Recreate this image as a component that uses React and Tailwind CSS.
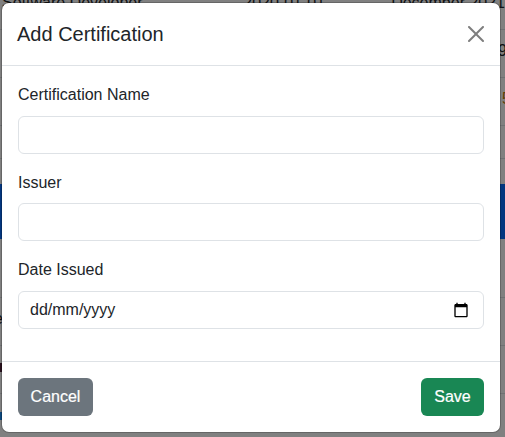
import React from "react";

function Field({ label, children, className = "" }) {
  return (
    <div className={className}>
      <label className="block h-[34px] pt-px leading-6">{label}</label>
      {children}
    </div>
  );
}

const box =
  "flex h-[38px] w-full items-center justify-between rounded-md border border-[#dee2e6] bg-white pl-[11px] pr-3 outline-none";

function Backdrop() {
  return (
    <div className="flex h-[437px] w-[505px] flex-col overflow-hidden bg-[#808080] text-[#101214]">
      <div className="flex h-[30px] shrink-0 border-b border-[#6f7173] pl-[2px]">
        <span className="-mt-[9px] w-[243px] leading-6">Software Developer</span>
        <span className="-mt-[9px] w-[149px] leading-6">2020-01-01</span>
        <span className="-mt-[9px] whitespace-nowrap leading-6">December 2021</span>
      </div>
      <div className="flex h-12 shrink-0 items-center justify-end border-b border-[#6f7173]">
        <span className="-mr-[2px] mt-[-6px]">9</span>
      </div>
      <div className="flex h-12 shrink-0 items-center justify-end border-b border-[#6f7173]">
        <span className="-mr-[6px] mt-[-6px] text-[#633d05]">5</span>
      </div>
      <div className="h-[33px] shrink-0 border-b border-[#6f7173]" />
      <div className="h-[25px] shrink-0" />
      <div className="h-[55px] shrink-0 bg-[#03367f]" />
      <div className="h-[59px] shrink-0 border-b border-[#6f7173]" />
      <div className="flex h-12 shrink-0 items-center border-b border-[#6f7173]">
        <span className="-ml-[6px] mt-[-6px]">e</span>
      </div>
      <div className="flex h-12 shrink-0 items-center border-b border-[#6f7173]">
        <span className="-mt-[4px] h-[9px] w-[2px] bg-[#28101c]" />
      </div>
      <div className="flex h-12 shrink-0 items-center">
        <span className="-mt-[4px] h-[8px] w-[2px] bg-[#0b477c]" />
      </div>
    </div>
  );
}

export default function App() {
  return (
    <div className="relative h-[437px] w-[505px] overflow-hidden text-base font-normal text-[#212529] [font-family:'Liberation_Sans',Arial,sans-serif]">
      <Backdrop />
      <div
        role="dialog"
        className="absolute left-px top-[2px] flex h-[431px] w-[500px] flex-col rounded-lg border border-black/20 bg-white bg-clip-padding"
      >
        <div className="flex h-[63px] shrink-0 items-center justify-between border-b border-[#dee2e6] px-4">
          <h5 className="-ml-px text-xl leading-[30px]">Add Certification</h5>
          <button aria-label="Close" className="flex size-4">
            <svg viewBox="0 0 16 16" className="size-4" fill="black" opacity=".5">
              <path d="M.293.293a1 1 0 0 1 1.414 0L8 6.586 14.293.293a1 1 0 1 1 1.414 1.414L9.414 8l6.293 6.293a1 1 0 0 1-1.414 1.414L8 9.414l-6.293 6.293a1 1 0 0 1-1.414-1.414L6.586 8 .293 1.707a1 1 0 0 1 0-1.414z" />
            </svg>
          </button>
        </div>
        <div className="flex h-[295px] shrink-0 flex-col px-4 pt-4">
          <Field label="Certification Name">
            <input className={box} />
          </Field>
          <Field label="Issuer" className="mt-[15px] [&>label]:pt-[2px]">
            <input className={box} />
          </Field>
          <Field label="Date Issued" className="mt-4">
            <div className={box}>
              <span>dd/mm/yyyy</span>
              <svg viewBox="0 0 24 24" className="mr-[2px] size-4">
                <path d="M20 3h-1V1h-2v2H7V1H5v2H4c-1.100 0-2 .9-2 2v16c0 1.100.9 2 2 2h16c1.100 0 2-.9 2-2V5c0-1.100-.9-2-2-2zm0 18H4V8h16v13z" />
              </svg>
            </div>
          </Field>
        </div>
        <div className="flex grow items-center justify-between border-t border-[#dee2e6] px-4">
          <button className="h-[38px] w-[75px] rounded-md bg-[#6c757d] text-white [-webkit-text-stroke:0.2px_white]">Cancel</button>
          <button className="h-[38px] w-[63px] rounded-md bg-[#198754] text-white [-webkit-text-stroke:0.2px_white]">Save</button>
        </div>
      </div>
    </div>
  );
}
